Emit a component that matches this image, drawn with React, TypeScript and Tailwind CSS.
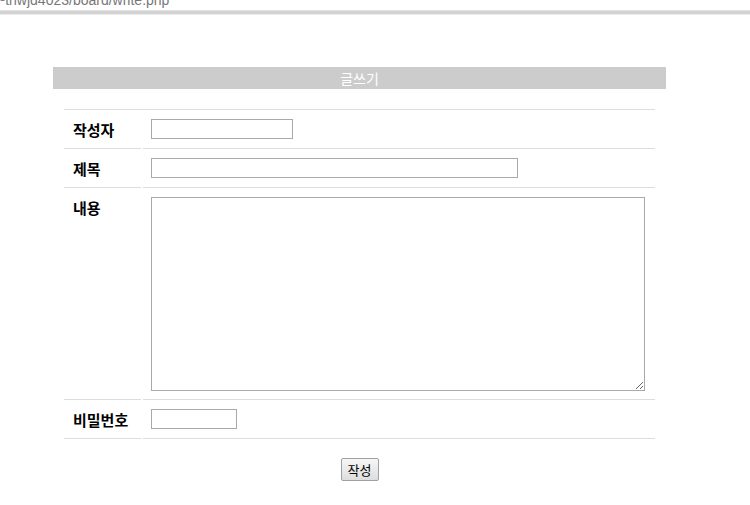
import React from "react";

const font = { fontFamily: '"Malgun Gothic", "Noto Sans CJK KR", sans-serif' };

const Row = ({ label, children }: { label: string; children: React.ReactNode }) => (
  <div className="flex gap-[2px]">
    <div className="w-[77px] shrink-0 border-b border-[#dddddd] pl-[9px] pt-[9px] text-[15px] font-bold leading-[21px] text-black">
      {label}
    </div>
    <div className="flex-1 border-b border-[#dddddd] py-[9px] pl-[8px] pr-[10px]">{children}</div>
  </div>
);

export default function App() {
  return (
    <div className="h-[505px] w-[750px] bg-white" style={font}>
      <div className="h-[10px] overflow-hidden">
        <div
          className="-ml-[3px] -mt-[9px] text-[14px] leading-[18px] text-[#777]"
          style={{ fontFamily: '"Liberation Sans", sans-serif' }}
        >
          ~thwjd4023/board/write.php
        </div>
      </div>
      <div className="h-[5px] border-t border-b border-t-[#e2e2e2] border-b-[#ececec] bg-[#d2d2d2]" />

      <div className="ml-[53px] mt-[52px] w-[613px]">
        <div className="flex h-[22px] items-center justify-center bg-[#cccccc] text-[14px] text-white">
          글쓰기
        </div>

        <div className="ml-[11px] mt-[20px] w-[591px] border-t border-[#dddddd]">
          <Row label="작성자">
            <input className="block h-[20px] w-[142px] border border-[#a9a9a9] bg-white" type="text" />
          </Row>
          <Row label="제목">
            <input className="block h-[20px] w-[367px] border border-[#a9a9a9] bg-white" type="text" />
          </Row>
          <Row label="내용">
            <textarea className="mb-[-1px] block h-[194px] w-[494px] resize border border-[#a9a9a9] bg-white" />
          </Row>
          <Row label="비밀번호">
            <input className="block h-[20px] w-[86px] border border-[#a9a9a9] bg-white" type="text" />
          </Row>
        </div>

        <div className="mt-[19px] flex justify-center">
          <button className="h-[23px] w-[38px] rounded-[2px] border border-[#a0a0a0] bg-gradient-to-b from-[#f6f6f6] to-[#dedede] text-[13px] leading-[20px] text-black">
            작성
          </button>
        </div>
      </div>
    </div>
  );
}
